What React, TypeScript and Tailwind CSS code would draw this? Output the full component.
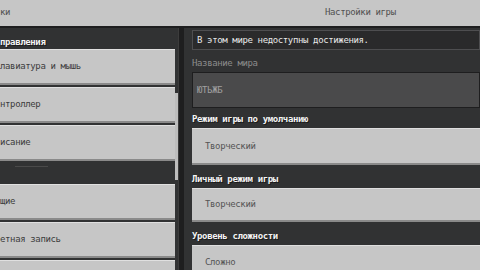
// App.tsx
const leftTop = ['лавиатура и мышь', 'нтроллер', 'исание']
const leftBottom = ['щие', 'етная запись', '']

function LeftButton({ label, h = 'h-[36px]' }: { label: string; h?: string }) {
  return (
    <div className={`${h} shrink-0 mb-[2px] bg-[#c6c6c6] border-t border-[#e0e0e0] border-b-2 border-b-[#8a8a8a] flex items-center text-[#3c3c3c]`}>
      {label}
    </div>
  )
}

function Label({ text, h, dim }: { text: string; h: string; dim?: boolean }) {
  return (
    <div className={`${h} shrink-0 flex items-end pb-[4px] ${dim ? 'text-[#8c8c8c]' : 'text-[#f4f4f4] font-semibold [text-shadow:1px_1px_0_#1a1a1a]'}`}>
      {text}
    </div>
  )
}

function Select({ value, h }: { value: string; h: string }) {
  return (
    <div className={`${h} shrink-0 bg-[#c6c6c6] border-t border-[#dedede] border-b-2 border-b-[#8a8a8a] flex items-center pl-[13px] text-[#555555]`}>
      {value}
    </div>
  )
}

export default function App() {
  return (
    <div className="w-[480px] h-[270px] overflow-hidden bg-[#313233] flex flex-col font-['DejaVu_Sans_Mono','Liberation_Mono',monospace] text-[9px] tracking-[-0.37px] leading-none">
      <header className="h-[28px] shrink-0 bg-[#c6c6c6] border-b-2 border-[#1e1e1f] flex items-center pb-[2px] text-[#505050]">
        <span className="w-[325px]">ки</span>
        <span>Настройки игры</span>
      </header>

      <div className="flex flex-1 min-h-0">
        <div className="w-[178px] flex shrink-0">
          <div className="w-[175px] flex flex-col">
            <div className="h-[21px] shrink-0 flex items-end pb-[2px] text-[#f4f4f4] font-semibold [text-shadow:1px_1px_0_#1a1a1a]">правления</div>
            {leftTop.map((l) => (
              <LeftButton key={l} label={l} />
            ))}
            <div className="h-[23px] shrink-0 -mt-[2px] pt-[5px] pl-[15px]">
              <div className="w-[33px] h-px bg-[#4a4a4a]" />
            </div>
            {leftBottom.map((l, i) => (
              <LeftButton key={i} label={l} />
            ))}
          </div>
          <div className="w-[3px] pt-[65px]">
            <div className="h-[87px] bg-[#bdbdbd]" />
          </div>
        </div>

        <div className="w-[6px] shrink-0 bg-[#1e1e1f] border-l border-[#3c3c3c]" />

        <div className="flex-1 pl-[8px] pt-[2px] flex flex-col">
          <div className="h-[20px] shrink-0 bg-[#2a2a2b] border border-[#4e4e50] flex items-center pl-[4px] text-[#e8e8e8]">
            В этом мире недоступны достижения.
          </div>
          <Label text="Название мира" h="h-[22px]" dim />
          <div className="h-[36px] shrink-0 bg-[#4a4a4b] border border-[#1e1e1f] flex items-center pl-[4px] text-[#a0a0a0]">
            ЮТЬЖБ
          </div>
          <Label text="Режим игры по умолчанию" h="h-[20px]" />
          <Select value="Творческий" h="h-[37px]" />
          <Label text="Личный режим игры" h="h-[23px]" />
          <Select value="Творческий" h="h-[34px]" />
          <Label text="Уровень сложности" h="h-[23px]" />
          <Select value="Сложно" h="h-[36px]" />
        </div>
      </div>
    </div>
  )
}
